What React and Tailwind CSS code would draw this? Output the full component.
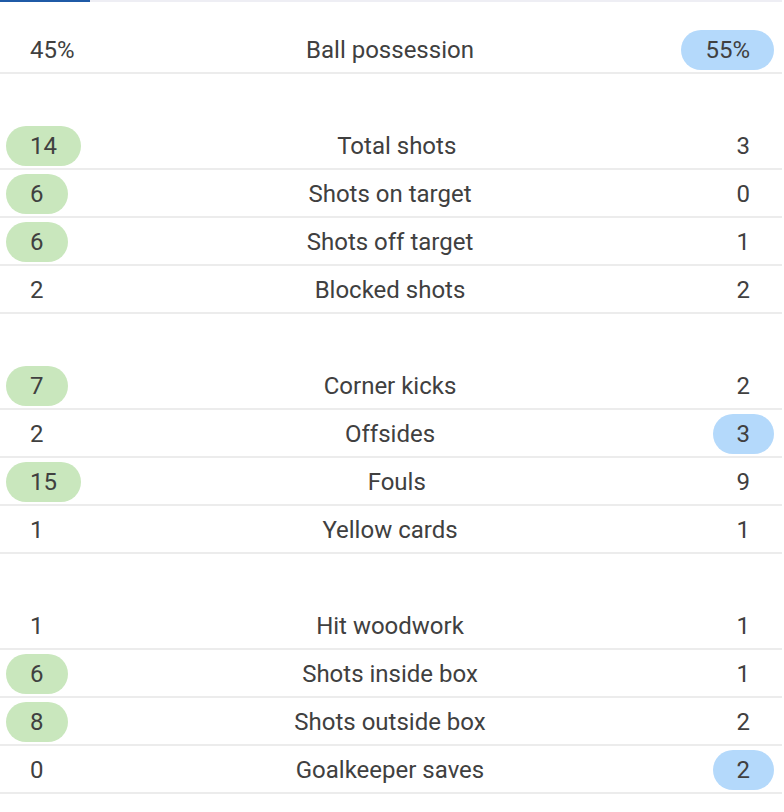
const groups = [
  [{ label: "Ball possession", home: "45%", away: "55%", win: "away" }],
  [
    { label: "Total shots", home: "14", away: "3", win: "home" },
    { label: "Shots on target", home: "6", away: "0", win: "home" },
    { label: "Shots off target", home: "6", away: "1", win: "home" },
    { label: "Blocked shots", home: "2", away: "2" },
  ],
  [
    { label: "Corner kicks", home: "7", away: "2", win: "home" },
    { label: "Offsides", home: "2", away: "3", win: "away" },
    { label: "Fouls", home: "15", away: "9", win: "home" },
    { label: "Yellow cards", home: "1", away: "1" },
  ],
  [
    { label: "Hit woodwork", home: "1", away: "1" },
    { label: "Shots inside box", home: "6", away: "1", win: "home" },
    { label: "Shots outside box", home: "8", away: "2", win: "home" },
    { label: "Goalkeeper saves", home: "0", away: "2", win: "away" },
  ],
];

function Value({ value, highlight }) {
  const bg =
    highlight === "home" ? "bg-[#c9e7bd]" : highlight === "away" ? "bg-[#b4d9fb]" : "";
  return (
    <div className={`h-10 min-w-[60px] px-6 rounded-full flex items-center justify-center ${bg}`}>
      {value}
    </div>
  );
}

function StatRow({ stat }) {
  return (
    <div className="h-12 pt-[2px] border-b-2 border-[#ececec] flex items-center pl-[6px] pr-[8px]">
      <Value value={stat.home} highlight={stat.win === "home" ? "home" : null} />
      <div className="flex-1 text-center">{stat.label}</div>
      <Value value={stat.away} highlight={stat.win === "away" ? "away" : null} />
    </div>
  );
}

export default function App() {
  return (
    <div
      className="w-[782px] bg-white text-[24px] text-[#404040] leading-none"
      style={{ fontFamily: "Roboto, sans-serif" }}
    >
      <div className="h-[2px] bg-[#eeeef4] flex">
        <div className="w-[90px] bg-[#1f5aa6]" />
      </div>
      {groups.map((rows, gi) => (
        <div key={gi} className={gi === 0 ? "pt-6" : "pt-12"}>
          {rows.map((stat, i) => (
            <StatRow key={i} stat={stat} />
          ))}
        </div>
      ))}
    </div>
  );
}
